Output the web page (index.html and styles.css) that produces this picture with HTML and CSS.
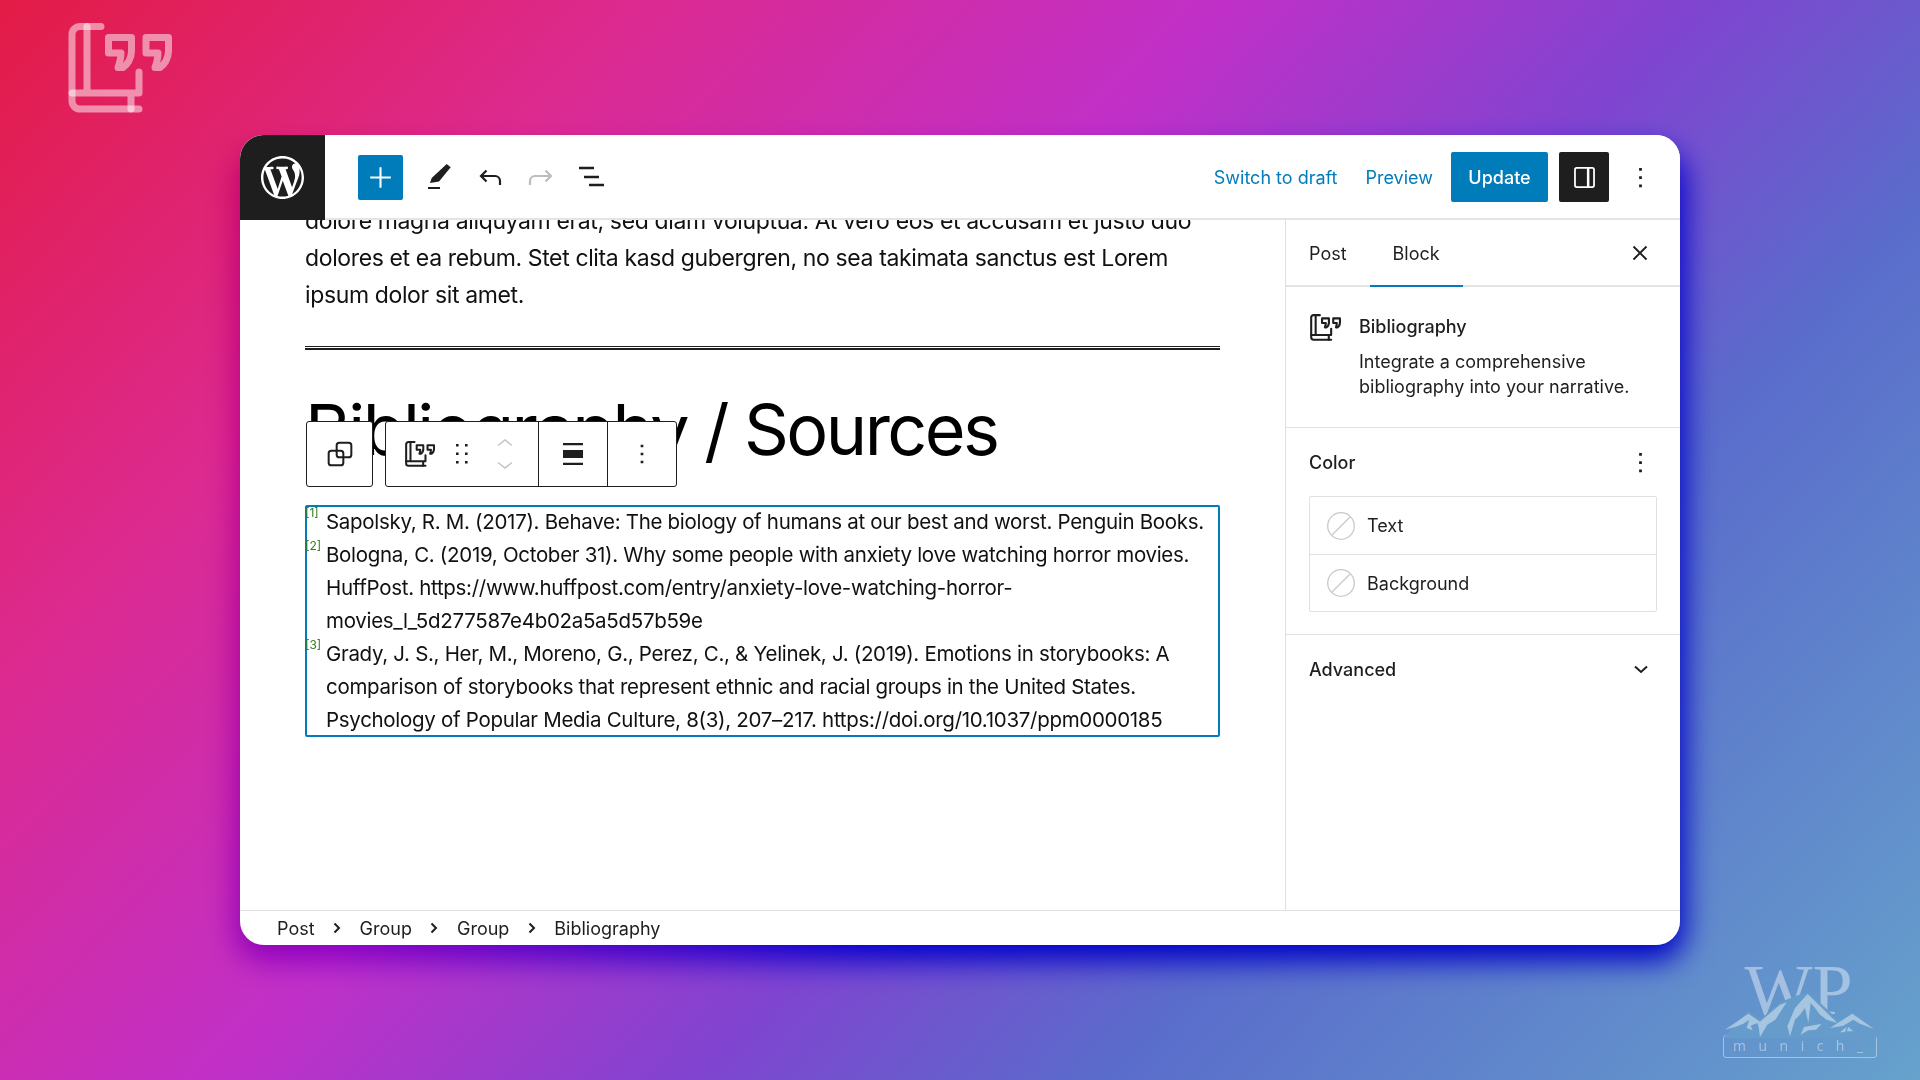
FILE: index.html
```html
<!DOCTYPE html>
<html lang="en">
<head>
<meta charset="utf-8">
<title>Bibliography block</title>
<link rel="stylesheet" href="styles.css">
</head>
<body>
<svg class="defs" width="0" height="0" aria-hidden="true">
  <symbol id="book" viewBox="0 0 104 90">
    <g fill="none" stroke="currentColor" stroke-width="7" stroke-linecap="round" stroke-linejoin="round">
      <path d="M33 3.500H12a8 8 0 0 0-8 8V78a8 8 0 0 0 8 8H71"/>
      <path d="M19 3.500V70M4 70H71V49M63 70V86"/>
      <path d="M40.500 14.500H63.500V28C63.500 36 59 42 55 44.500H50C52 39 53 35 53 30H40.500Z"/>
      <path d="M78 14.500H100.500V28C100.500 36 96 42 92 44.500H87C89 39 90 35 90 30H78Z"/>
    </g>
  </symbol>
  <symbol id="dots" viewBox="0 0 24 24">
    <path fill="currentColor" d="M13 19h-2v-2h2v2zm0-6h-2v-2h2v2zm0-6h-2V5h2v2z"/>
  </symbol>
  <symbol id="swatch" viewBox="0 0 28 28">
    <circle cx="14" cy="14" r="13.300" fill="#fff" stroke="#c9c9c9" stroke-width="1.300"/>
    <path d="M5 23L23 5" stroke="#c9c9c9" stroke-width="1.300"/>
  </symbol>
  <symbol id="crumb" viewBox="0 0 10 14">
    <path d="M2.500 2.500L7 7l-4.500 4.500" fill="none" stroke="currentColor" stroke-width="2"/>
  </symbol>
</svg>

<svg class="corner-logo"><use href="#book"/></svg>

<div class="watermark">
  <div class="wm-wp">WP</div>
  <svg class="wm-mountains" viewBox="130 160 460 135">
    <path fill="#669ccb" d="M130 295L205 215L240 240L300 188L383 155L480 245L517 215L590 272L590 295Z"/>
    <path fill="currentColor" d="M135 270L205 222L240 246L300 195L320 188L286 240L262 255L240 292L236 262L232 250L212 258L218 272L200 265L208 240L190 252L165 262Z"/>
    <path fill="currentColor" d="M383 163L472 250L440 240L420 225L405 205L392 190L385 250L375 205L360 225L345 240L330 290L322 260L345 205Z"/>
    <path fill="currentColor" d="M362 285L372 262L425 252L408 270L385 272Z"/>
    <path fill="currentColor" d="M450 265L517 222L582 268L540 252L520 240L490 258Z"/>
    <path fill="currentColor" d="M480 278L500 262L495 278ZM505 262L520 275L500 275Z"/>
  </svg>
  <div class="wm-box">munich_</div>
</div>

<div class="window">
  <header class="topbar">
    <a class="wp-tile">
      <svg class="wp-logo" viewBox="0 0 20 20"><path fill="#fff" d="M20 10c0-5.510-4.490-10-10-10C4.480 0 0 4.490 0 10c0 5.520 4.480 10 10 10 5.510 0 10-4.480 10-10zM7.780 15.370L4.370 6.220c.550-.020 1.170-.080 1.170-.080.500-.060.440-1.130-.060-1.110 0 0-1.450.110-2.370.110-.180 0-.370 0-.580-.010C4.120 2.690 6.870 1.110 10 1.110c2.330 0 4.450.870 6.050 2.340-.680-.110-1.650.390-1.650 1.580 0 .740.450 1.360.900 2.100.350.610.550 1.360.550 2.460 0 1.490-1.400 5-1.400 5l-3.030-8.370c.540-.020.820-.170.820-.170.500-.050.440-1.250-.060-1.220 0 0-1.440.120-2.380.120-.870 0-2.330-.120-2.330-.120-.500-.030-.560 1.200-.060 1.220l.920.080 1.260 3.410zM17.410 10c.240-.640.740-1.870.430-4.250.700 1.290 1.050 2.710 1.050 4.250 0 3.290-1.730 6.240-4.400 7.780.970-2.590 1.940-5.200 2.920-7.780zM6.100 18.090C3.120 16.650 1.110 13.530 1.110 10c0-1.300.230-2.480.720-3.590C3.250 10.300 4.670 14.200 6.100 18.090zm4.030-6.630l2.580 6.980c-.860.290-1.760.450-2.710.450-.790 0-1.570-.110-2.290-.330.810-2.380 1.620-4.740 2.420-7.100z"/></svg>
    </a>
    <div class="tools">
      <button class="add"><svg viewBox="0 0 24 24" class="ico-plus"><path fill="#fff" d="M11.200 4h1.600v7.200H20v1.600h-7.200V20h-1.600v-7.200H4v-1.600h7.200z"/></svg></button>
      <svg class="tool" viewBox="0 0 33 33"><path fill="#1e1e1e" d="M24.700 3L28.700 6.300L17 20.500L8 22L9.700 17ZM6 26h12v2H6z"/></svg>
      <svg class="tool" viewBox="0 0 33 33"><path fill="none" stroke="#1e1e1e" stroke-width="2.200" d="M13.500 9.500L8 15l5.500 5.500M8 15H22a5 5 0 0 1 5 5v4"/></svg>
      <svg class="tool" viewBox="0 0 33 33"><path fill="none" stroke="#bdbdbd" stroke-width="2.200" d="M21.500 9.500L27 15l-5.500 5.500M27 15H11a5 5 0 0 0-5 5v4"/></svg>
      <svg class="tool" viewBox="0 0 33 33"><path fill="#1e1e1e" d="M4 5.800h15v2.400H4zM9 14.800h15v2.400H9zM14 22.800h15v2.400H14z"/></svg>
    </div>
    <div class="actions">
      <a class="link">Switch to draft</a>
      <a class="link">Preview</a>
      <button class="update">Update</button>
      <button class="panel"><svg viewBox="0 0 24 24"><path fill="#fff" fill-rule="evenodd" d="M4.500 2h15A2.500 2.500 0 0 1 22 4.500v15a2.500 2.500 0 0 1-2.500 2.500h-15A2.500 2.500 0 0 1 2 19.500v-15A2.500 2.500 0 0 1 4.500 2zM3.700 4.500v15c0 .4.400.8.800.8h9.800V3.700H4.500c-.4 0-.8.400-.8.800zm13 15.800h2.800c.4 0 .8-.4.800-.8v-15c0-.4-.4-.8-.8-.8h-2.800z"/></svg></button>
      <svg class="more"><use href="#dots"/></svg>
    </div>
  </header>

  <div class="body">
    <main class="editor">
      <div class="canvas">
        <p class="para">dolore magna aliquyam erat, sed diam voluptua. At vero eos et accusam et justo duo dolores et ea rebum. Stet clita kasd gubergren, no sea takimata sanctus est Lorem ipsum dolor sit amet.</p>
        <hr class="rule">
        <h1 class="title">Bibliography / Sources</h1>
        <ol class="refs">
          <li><sup>[1]</sup>Sapolsky, R. M. (2017). Behave: The biology of humans at our best and worst. Penguin Books.</li>
          <li><sup>[2]</sup>Bologna, C. (2019, October 31). Why some people with anxiety love watching horror movies. HuffPost. https://www.huffpost.com/entry/anxiety-love-watching-horror-movies_l_5d277587e4b02a5a5d57b59e</li>
          <li><sup>[3]</sup>Grady, J. S., Her, M., Moreno, G., Perez, C., &amp; Yelinek, J. (2019). Emotions in storybooks: A comparison of storybooks that represent ethnic and racial groups in the United States. Psychology of Popular Media Culture, 8(3), 207–217. https://doi.org/10.1037/ppm0000185</li>
        </ol>
      </div>
      <div class="block-toolbar">
        <div class="tb-group tb-single">
          <svg class="tb-ico" viewBox="0 0 24 24"><g fill="none" stroke="#1e1e1e" stroke-width="1.500"><rect x="9.500" y="3.500" width="11" height="11" rx="2"/><rect x="3.500" y="9.500" width="11" height="11" rx="2"/></g></svg>
        </div>
        <div class="tb-group">
          <div class="tb-cell tb-parent">
            <svg class="tb-book"><use href="#book"/></svg>
            <svg class="tb-drag" viewBox="0 0 12 22"><path fill="#1e1e1e" d="M0 1h2.600v2.600H0zM9 1h2.600v2.600H9zM0 9.500h2.600v2.600H0zM9 9.500h2.600v2.600H9zM0 18h2.600v2.600H0zM9 18h2.600v2.600H9z"/></svg>
            <svg class="tb-move" viewBox="0 0 16 30"><path fill="none" stroke="#c4c4c4" stroke-width="1.500" d="M1 6.500L8 1l7 5.500M1 23.500L8 29l7-5.500"/></svg>
          </div>
          <div class="tb-cell tb-align">
            <svg class="tb-ico" viewBox="0 0 24 24"><path fill="#1e1e1e" d="M4.500 3.750h15V5.500h-15zM4.500 9h15v6h-15zM4.500 18.500h15v1.750h-15z"/></svg>
          </div>
          <div class="tb-cell tb-opts">
            <svg class="tb-ico"><use href="#dots"/></svg>
          </div>
        </div>
      </div>
    </main>

    <aside class="sidebar">
      <div class="tabs">
        <span class="tab">Post</span>
        <span class="tab tab-active">Block</span>
        <svg class="close" viewBox="0 0 24 24"><path fill="none" stroke="#1e1e1e" stroke-width="1.900" d="M5.500 5.500l13 13M18.500 5.500l-13 13"/></svg>
      </div>
      <section class="card">
        <svg class="card-ico"><use href="#book"/></svg>
        <div class="card-text">
          <h2 class="card-title">Bibliography</h2>
          <p class="card-desc">Integrate a comprehensive bibliography into your narrative.</p>
        </div>
      </section>
      <section class="color">
        <div class="panel-head">
          <h2 class="panel-title">Color</h2>
          <svg class="more"><use href="#dots"/></svg>
        </div>
        <div class="swatches">
          <div class="swatch-row"><svg class="swatch"><use href="#swatch"/></svg><span>Text</span></div>
          <div class="swatch-row"><svg class="swatch"><use href="#swatch"/></svg><span>Background</span></div>
        </div>
      </section>
      <section class="advanced">
        <h2 class="panel-title">Advanced</h2>
        <svg class="chev" viewBox="0 0 24 24"><path fill="none" stroke="#1e1e1e" stroke-width="2" d="M6 9.500l6 5.500 6-5.500"/></svg>
      </section>
    </aside>
  </div>

  <footer class="crumbs">
    <span>Post</span><svg class="crumb"><use href="#crumb"/></svg>
    <span>Group</span><svg class="crumb"><use href="#crumb"/></svg>
    <span>Group</span><svg class="crumb"><use href="#crumb"/></svg>
    <span>Bibliography</span>
  </footer>
</div>
</body>
</html>
```
FILE: styles.css
```css
* { box-sizing: border-box; }
html, body { height: 100%; }
body {
  margin: 0;
  height: 1080px;
  overflow: hidden;
  display: flex;
  align-items: center;
  justify-content: center;
  font-family: Inter, "Liberation Sans", sans-serif;
  color: #1e1e1e;
  background: linear-gradient(133deg, #e31b45 0%, #dc2a90 22%, #c030c8 42%, #8044d0 58%, #5a6ccb 72%, #66a2cc 100%);
}
.defs { position: absolute; }
h1, h2, p, ol { margin: 0; padding: 0; }
button { border: 0; padding: 0; font: inherit; }

.corner-logo { position: absolute; left: 68px; top: 23px; width: 104px; height: 90px; color: rgba(255,255,255,.5); }

.watermark { position: absolute; left: 1723px; top: 960px; width: 154px; height: 98px; color: rgba(255,255,255,.42); display: flex; flex-direction: column; align-items: center; }
.wm-wp { font: 72px/60px "Liberation Serif", serif; margin-right: 3px; height: 50px; }
.wm-mountains { position: absolute; left: 0; top: 33px; width: 154px; height: 45px; }
.wm-box { margin-top: auto; width: 154px; height: 23px; border: 1.500px solid currentColor; border-radius: 3px; font: 14px/20px "Open Sans", sans-serif; letter-spacing: 12.500px; padding-left: 9px; white-space: nowrap; }

.window { position: relative; width: 1440px; height: 810px; background: #fff; border-radius: 24px; display: flex; flex-direction: column; }
.window::before { content: ""; position: absolute; inset: 10px 0 0 0; border-radius: 24px; box-shadow: 0 11px 30px 5px rgb(135,80,240); mix-blend-mode: color-burn; z-index: -1; }

.topbar { height: 85px; flex: none; display: flex; align-items: center; padding-top: 1px; border-bottom: 2px solid #e4e4e4; background: #fff; position: relative; z-index: 2; border-radius: 24px 24px 0 0; }
.wp-tile { width: 85px; height: 85px; margin: -1px 0 -2px; background: #1e1e1e; border-radius: 24px 0 0 0; display: flex; align-items: center; justify-content: center; flex: none; }
.wp-logo { width: 43px; height: 43px; }
.tools { display: flex; align-items: center; margin-left: 33px; }
.add { width: 45px; height: 45px; background: #007cba; border-radius: 2px; display: flex; align-items: center; justify-content: center; margin-right: 10px; }
.ico-plus { width: 31px; height: 31px; }
.tool { width: 33px; height: 33px; margin: 0 9px; }
.actions { margin-left: auto; display: flex; align-items: center; padding-right: 23px; }
.link { color: #007cba; font-size: 18px; margin-right: 28px; padding-top: 1px; }
.update { width: 97px; height: 50px; background: #007cba; color: #fff; border-radius: 2px; font-size: 18px; font-weight: 500; padding-top: 1px; margin-left: -10px; margin-right: 11px; }
.panel { width: 50px; height: 50px; background: #1e1e1e; border-radius: 2px; display: flex; align-items: center; justify-content: center; margin-right: 15px; }
.panel svg { width: 25px; height: 25px; }
.more { width: 33px; height: 33px; display: block; }

.body { flex: 1; display: flex; min-height: 0; }
.editor { flex: 1; position: relative; overflow: hidden; min-width: 0; }
.canvas { width: 915px; margin-left: 65px; margin-top: -17.500px; }
.para { font-size: 23px; line-height: 37px; letter-spacing: -.37px; color: #111; }
.rule { margin: 32.500px 0 0; height: 4px; border: 0; border-top: 1px solid #1e1e1e; border-bottom: 2px solid #1e1e1e; background: #fff; }
.title { font-size: 70px; font-weight: 400; line-height: 84px; margin-top: 37.500px; color: #000; letter-spacing: -2.550px; }
.refs { list-style: none; margin-top: 33px; border: 2px solid #007cba; border-radius: 2px; height: 232px; font-size: 20.500px; letter-spacing: -.3px; line-height: 33px; padding-left: 19px; position: relative; color: #111; }
.refs li { position: relative; top: -2px; }
.refs sup { position: absolute; left: -21px; top: -2px; font-size: 12px; line-height: 20px; letter-spacing: 0; color: #3a7a1e; }

.block-toolbar { position: absolute; left: 66px; top: 201px; display: flex; gap: 12px; height: 66px; }
.tb-group { display: flex; background: #fff; border: 1.500px solid #1e1e1e; border-radius: 3px; height: 66px; }
.tb-single { width: 67px; align-items: center; justify-content: center; }
.tb-cell { display: flex; align-items: center; justify-content: center; height: 100%; }
.tb-parent { width: 153px; border-right: 1.500px solid #1e1e1e; justify-content: flex-start; padding-left: 19px; }
.tb-align { width: 69px; border-right: 1.500px solid #1e1e1e; }
.tb-opts { width: 68px; }
.tb-ico { width: 32px; height: 32px; display: block; }
.tb-book { width: 30px; height: 26px; }
.tb-drag { width: 12px; height: 22px; margin-left: 21px; }
.tb-move { width: 16px; height: 30px; margin-left: 29px; }

.sidebar { width: 395px; flex: none; border-left: 1.500px solid #e0e0e0; font-size: 18px; }
.tabs { height: 67px; border-bottom: 2px solid #e4e4e4; display: flex; align-items: center; padding-left: 23px; position: relative; }
.tab { font-size: 18px; padding-top: 1px; }
.tab-active { margin-left: 46px; height: 100%; display: flex; align-items: center; position: relative; }
.tab-active::after { content: ""; position: absolute; left: -23px; right: -23px; bottom: -2px; height: 2px; background: #007cba; }
.close { width: 24px; height: 24px; margin-left: auto; margin-right: 28px; }
.card { height: 141px; border-bottom: 1.500px solid #e0e0e0; padding: 24px 20px 0 24px; display: flex; gap: 18px; }
.card-ico { width: 31px; height: 27px; margin-top: 3px; flex: none; }
.card-title { font-size: 18px; font-weight: 500; line-height: 25px; margin-top: 3px; }
.card-desc { line-height: 25px; margin-top: 10px; font-size: 18px; }
.color { height: 207px; border-bottom: 1.500px solid #e0e0e0; padding: 0 23px 0 23px; }
.panel-head { display: flex; align-items: center; justify-content: space-between; height: 68px; }
.panel-head .more { margin-right: 0; }
.panel-title { font-size: 18px; font-weight: 500; }
.swatches { border: 1.500px solid #e0e0e0; border-radius: 2px; }
.swatch-row { height: 57px; display: flex; align-items: center; gap: 12px; padding-left: 17px; }
.swatch-row + .swatch-row { border-top: 1.500px solid #e0e0e0; }
.swatch { width: 28px; height: 28px; }
.advanced { height: 68px; display: flex; align-items: center; justify-content: space-between; padding: 0 27px 0 23px; }
.chev { width: 24px; height: 24px; }

.crumbs { height: 35px; flex: none; border-top: 1.500px solid #e0e0e0; display: flex; align-items: center; padding-left: 37px; font-size: 18px; color: #1e1e1e; }
.crumb { width: 10px; height: 14px; margin: 0 17.500px; }
```
